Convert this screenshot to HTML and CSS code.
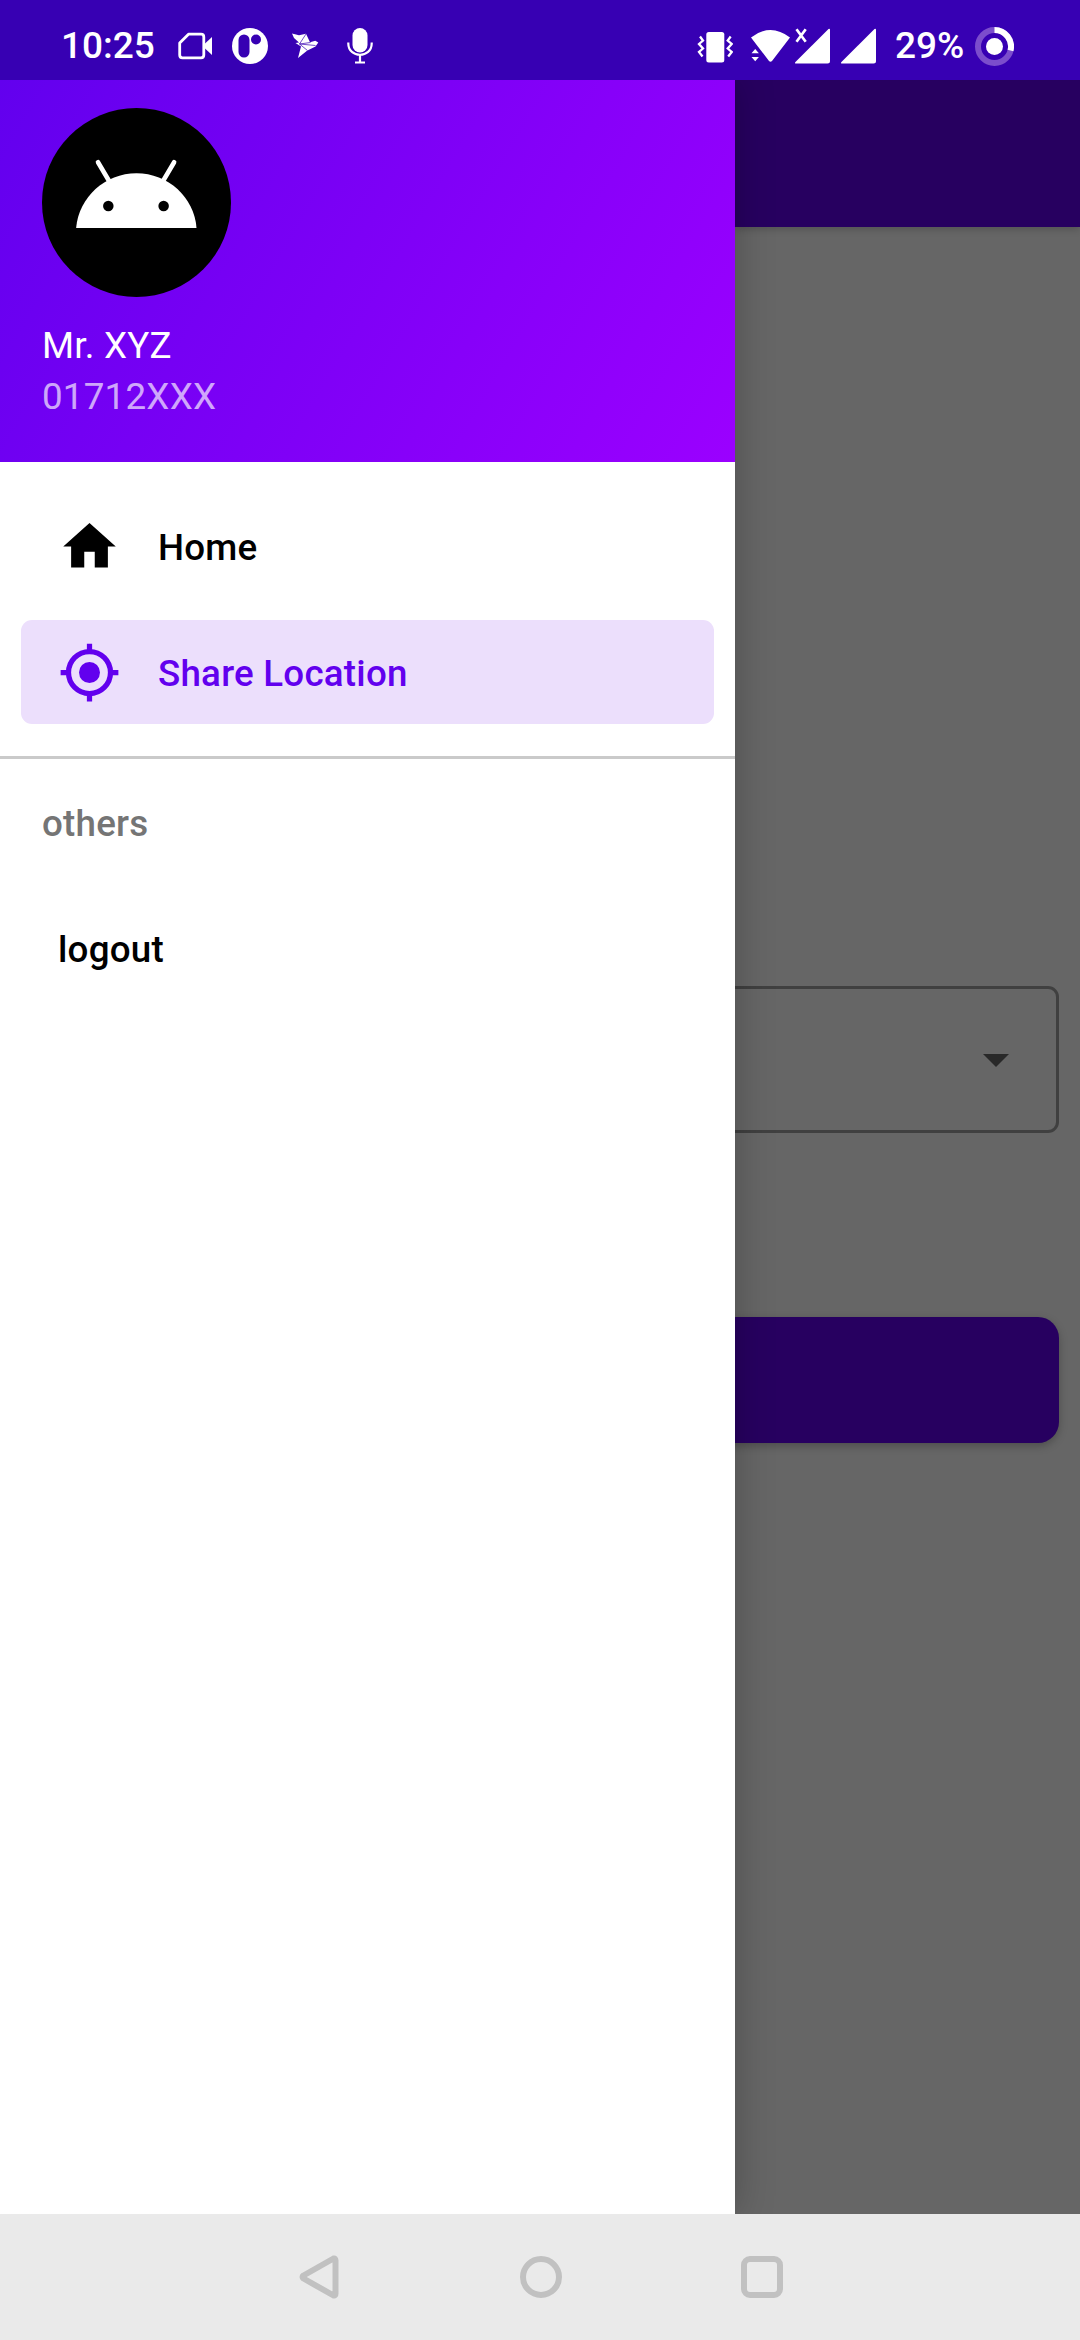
FILE: index.html
```html
<!DOCTYPE html>
<html lang="en">
<head>
<meta charset="utf-8">
<title>Share Location</title>
<link rel="stylesheet" href="styles.css">
</head>
<body>
<div class="screen">
  <header class="status">
    <div class="status-group">
      <span class="status-text clock">10:25</span>
      <svg class="video" width="36" height="80" viewBox="177 0 36 80"><path d="M188.500 34.200h12.500q2.800 0 2.800 2.800v18q0 2.800-2.800 2.800h-18.500q-2.800 0-2.800-2.800v-12z" fill="none" stroke="#fff" stroke-width="2.800" stroke-linejoin="round"/><path d="M204.500 44l7.500-7v18l-7.500-7z" fill="#fff"/></svg>
      <svg class="badge" width="38" height="80" viewBox="231 0 38 80"><circle cx="250" cy="46" r="18" fill="#fff"/><rect x="238.500" y="34.500" width="11" height="23" rx="5.500" fill="#3700b3"/><circle cx="256" cy="39.500" r="5" fill="#3700b3"/></svg>
      <svg class="bird" width="28" height="80" viewBox="291 0 28 80"><path d="M292 33.500l7 1.800 7-1.500 4 8.500 5.300-1.500 3 1.700-2.800 4-8.500 4.200-9 7.300 3-11.500-5.500-3.500 3.500-.5-5-4.500z" fill="#fff"/><path d="M306 34l-6.500 10 16 1.500m-16-1.500l8 6.500m-8-6.500l11-1.500" fill="none" stroke="#3700b3" stroke-width=".7"/></svg>
      <svg class="mic" width="28" height="80" viewBox="346 0 28 80"><rect x="352.500" y="28" width="15" height="24.500" rx="7.500" fill="#fff"/><path d="M348.300 42.500v1c0 15 23.400 15 23.400 0v-1M360 55v7.500M355 62.500h10" fill="none" stroke="#fff" stroke-width="2.200"/></svg>
    </div>
    <div class="status-group">
      <svg class="vibrate" width="36" height="80" viewBox="697 0 36 80"><rect x="706.300" y="32" width="18" height="30.500" rx="2.500" fill="#fff"/><path d="M700 36.500l3 4-4 3.500 4 4.500-4 3.500 3.500 4.500M730.700 36.500l-3 4 4 3.500-4 4.500 4 3.500-3.500 4.500" fill="none" stroke="#fff" stroke-width="2.300"/></svg>
      <svg class="wifi" width="40" height="80" viewBox="750 0 40 80"><path d="M751 37.500q19.500-15 39 0l-18 23.500q-1.500 1.500-3 0zM751.500 53.200l3.700-4.200 3.700 4.200zM751.500 57l3.700 4.200 3.700-4.200z" fill="#fff"/></svg>
      <svg class="signal-off" width="36" height="80" viewBox="794 0 36 80"><path d="M828.500 29q1.500-.8 1.500 1v31q0 2.500-2.500 2.500h-32q-1 0-.3-1.300z" fill="#fff"/><path d="M796.500 29.200l9.200 12.600m0-12.600l-9.200 12.600" stroke="#fff" stroke-width="2.700"/></svg>
      <svg class="signal" width="36" height="80" viewBox="840 0 36 80"><path d="M874.500 29q1.500-.8 1.500 1v31q0 2.500-2.500 2.500h-32q-1 0-.3-1.300z" fill="#fff"/></svg>
      <span class="status-text percent">29%</span>
      <svg class="battery" width="40" height="80" viewBox="974 0 40 80"><circle cx="994.500" cy="46.500" r="16.500" fill="none" stroke="#7b4dcc" stroke-width="6"/><path d="M994.500 30A16.500 16.500 0 0 1 1010.500 50.600" fill="none" stroke="#fff" stroke-width="6"/><circle cx="994.500" cy="46.500" r="8.500" fill="#fff"/></svg>
    </div>
  </header>

  <div class="app">
    <aside class="drawer">
      <div class="profile">
        <svg class="avatar" viewBox="0 0 108 108"><circle cx="54" cy="54" r="54" fill="#000"/><path d="M19.500 68.600C21 51 36 37.300 54 37.300S87 51 88.300 68.600z" fill="#fff"/><path d="M32 31l6.500 11M75.500 31L69 42" stroke="#fff" stroke-width="2.600" stroke-linecap="round"/><circle cx="37.900" cy="56" r="3"/><circle cx="69.500" cy="56" r="3"/></svg>
        <div class="name">Mr. XYZ</div>
        <div class="phone">01712XXX</div>
      </div>
      <nav class="menu">
        <a class="item"><svg class="icon" viewBox="0 0 24 24"><path d="M10 20v-6h4v6h5v-8h3L12 3 2 12h3v8z"/></svg><span>Home</span></a>
        <a class="item active"><svg class="icon" viewBox="0 0 24 24"><circle cx="12" cy="12" r="4"/><circle cx="12" cy="12" r="8" fill="none" stroke="currentColor" stroke-width="2"/><path d="M11 1h2v3h-2zM11 20h2v3h-2zM1 11h3v2H1zM20 11h3v2h-3z"/></svg><span>Share Location</span></a>
      </nav>
      <div class="others">
        <div class="group-title">others</div>
        <a class="item logout"><span>logout</span></a>
      </div>
    </aside>
    <main class="content">
      <div class="toolbar"></div>
      <div class="dropdown"><svg width="26" height="13" viewBox="0 0 26 13"><path d="M0 0h26L13 13z" fill="#292929"/></svg></div>
      <div class="button"></div>
    </main>
  </div>

  <footer class="navbar">
    <svg width="42" height="44" viewBox="0 0 42 44"><path d="M34.500 3.500q2-.5 2 2v33q0 2.500-2 2L4.500 23.500q-2-1.500 0-3z" fill="none" stroke="#c1c1c1" stroke-width="6" stroke-linejoin="round"/></svg>
    <svg width="42" height="42" viewBox="0 0 42 42"><circle cx="21" cy="21" r="18" fill="none" stroke="#c1c1c1" stroke-width="6"/></svg>
    <svg width="42" height="42" viewBox="0 0 42 42"><rect x="3" y="3" width="36" height="36" rx="6" fill="none" stroke="#c1c1c1" stroke-width="6"/></svg>
  </footer>
</div>
</body>
</html>
```
FILE: styles.css
```css
* { box-sizing: border-box; }

body {
  margin: 0;
  font-family: Roboto, sans-serif;
  font-size: 36.75px;
  line-height: 44px;
}

svg { display: block; flex: none; }

.screen {
  width: 1080px;
  height: 2340px;
  display: grid;
  grid-template-rows: 80px 2134px 126px;
  overflow: hidden;
}

.status {
  display: flex;
  justify-content: space-between;
  padding: 0 66px 0 61px;
  background: #3700b3;
  color: #fff;
  position: relative;
  z-index: 2;
}

.status-group { display: flex; }

.status-text {
  font-size: 37px;
  font-weight: 500;
  line-height: 92px;
  white-space: nowrap;
}

.clock { width: 116px; }
.badge { margin-left: 18px; }
.bird { margin-left: 22px; }
.mic { margin-left: 27px; }
.wifi { margin-left: 17px; }
.signal-off { margin-left: 4px; }
.signal { margin-left: 10px; }
.percent { width: 79px; margin-left: 19px; }

.app {
  display: grid;
  grid-template-columns: 735px 345px;
}

.drawer {
  background: #fff;
  letter-spacing: .22px;
  position: relative;
  z-index: 1;
  box-shadow: 0 0 36px rgba(0, 0, 0, .25);
}

.profile {
  height: 382px;
  padding: 28px 42px 0;
  background: linear-gradient(120deg, #6200ee, #9b00ff);
  color: #fff;
}

.avatar { width: 189px; height: 189px; }
.name { margin-top: 27px; }
.phone { margin-top: 7px; color: rgba(255, 255, 255, .67); }

.menu {
  display: grid;
  gap: 22px;
  padding: 32px 21px;
  border-bottom: 3px solid #cacaca;
}

.item {
  height: 104px;
  display: flex;
  align-items: center;
  gap: 37px;
  padding-left: 37px;
  border-radius: 11px;
  color: #000;
  font-weight: 500;
}

.item span { padding-top: 4px; }
.icon { width: 63px; height: 63px; fill: currentColor; }
.active { background: #ecdffc; color: #6200ee; }

.others { padding: 43px 21px; }

.group-title {
  padding-left: 21px;
  color: #757575;
  font-weight: 500;
}

.logout { margin-top: 50px; }

.content { background: #666; }

.toolbar {
  height: 147px;
  background: #270060;
  box-shadow: 0 2px 8px rgba(0, 0, 0, .2);
}

.dropdown {
  height: 147px;
  display: flex;
  align-items: center;
  justify-content: flex-end;
  margin: 759px 21px 0 -20px;
  padding: 2px 47px 0 0;
  border: 3px solid #404040;
  border-radius: 11px;
}

.button {
  height: 126px;
  margin: 184px 21px 0 -20px;
  border-radius: 21px;
  background: #270060;
  box-shadow: 0 3px 8px rgba(0, 0, 0, .25);
}

.navbar {
  display: flex;
  align-items: center;
  justify-content: space-between;
  padding: 0 297px 0 299px;
  background: #eaeaea;
  position: relative;
  z-index: 2;
}
```
